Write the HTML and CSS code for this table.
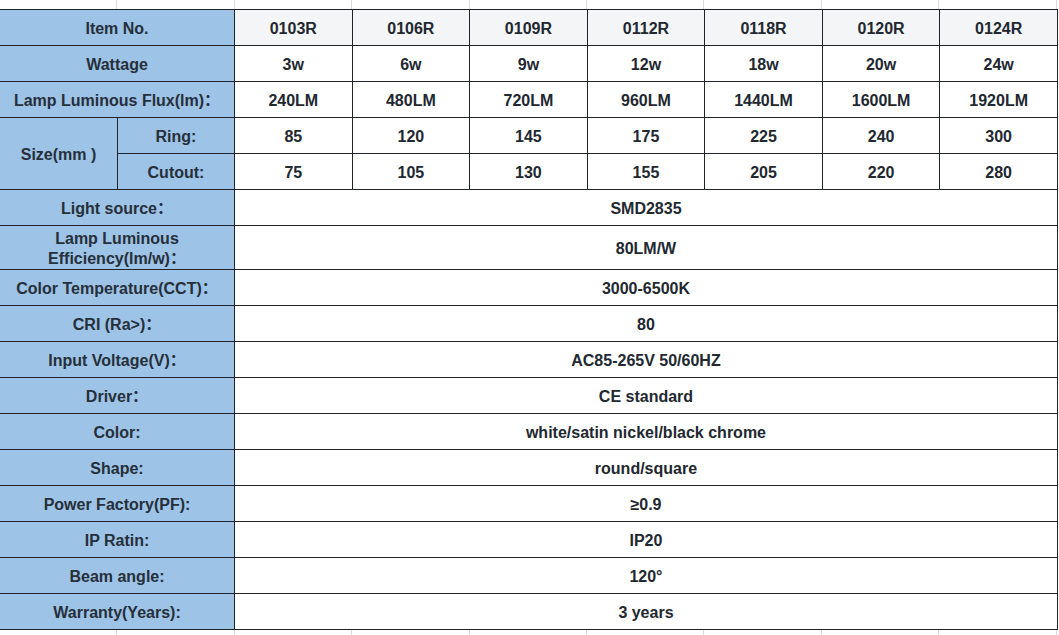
FILE: index.html
```html
<!DOCTYPE html>
<html>
<head>
<meta charset="utf-8">
<link rel="stylesheet" href="styles.css">
</head>
<body>
<div class="sheet">
<table class="spec">
  <colgroup>
    <col class="c-lab1"><col class="c-lab2">
    <col class="c-data"><col class="c-data"><col class="c-data"><col class="c-data"><col class="c-data"><col class="c-data"><col class="c-data">
  </colgroup>
  <tr class="head">
    <th colspan="2">Item No.</th>
    <td>0103R</td><td>0106R</td><td>0109R</td><td>0112R</td><td>0118R</td><td>0120R</td><td>0124R</td>
  </tr>
  <tr>
    <th colspan="2">Wattage</th>
    <td>3w</td><td>6w</td><td>9w</td><td>12w</td><td>18w</td><td>20w</td><td>24w</td>
  </tr>
  <tr>
    <th colspan="2">Lamp Luminous Flux(lm)：</th>
    <td>240LM</td><td>480LM</td><td>720LM</td><td>960LM</td><td>1440LM</td><td>1600LM</td><td>1920LM</td>
  </tr>
  <tr>
    <th rowspan="2">Size(mm )</th>
    <th>Ring:</th>
    <td>85</td><td>120</td><td>145</td><td>175</td><td>225</td><td>240</td><td>300</td>
  </tr>
  <tr>
    <th>Cutout:</th>
    <td>75</td><td>105</td><td>130</td><td>155</td><td>205</td><td>220</td><td>280</td>
  </tr>
  <tr><th colspan="2">Light source：</th><td colspan="7">SMD2835</td></tr>
  <tr class="tall"><th colspan="2">Lamp Luminous<br>Efficiency(lm/w)：</th><td colspan="7">80LM/W</td></tr>
  <tr><th colspan="2">Color Temperature(CCT)：</th><td colspan="7">3000-6500K</td></tr>
  <tr><th colspan="2">CRI (Ra&gt;)：</th><td colspan="7">80</td></tr>
  <tr><th colspan="2">Input Voltage(V)：</th><td colspan="7">AC85-265V 50/60HZ</td></tr>
  <tr><th colspan="2">Driver：</th><td colspan="7">CE standard</td></tr>
  <tr><th colspan="2">Color:</th><td colspan="7">white/satin nickel/black chrome</td></tr>
  <tr><th colspan="2">Shape:</th><td colspan="7">round/square</td></tr>
  <tr><th colspan="2">Power Factory(PF):</th><td colspan="7">≥0.9</td></tr>
  <tr><th colspan="2">IP Ratin:</th><td colspan="7">IP20</td></tr>
  <tr><th colspan="2">Beam angle:</th><td colspan="7">120°</td></tr>
  <tr><th colspan="2">Warranty(Years):</th><td colspan="7">3 years</td></tr>
</table>
</div>
</body>
</html>
```

FILE: styles.css
```css
html, body {
  margin: 0;
  padding: 0;
}
body {
  width: 1059px;
  height: 635px;
  overflow: hidden;
  background-color: #ffffff;
  background-image: repeating-linear-gradient(to right, transparent 0, transparent 116.4px, #d9d9d9 116.4px, #d9d9d9 117.4px);
  font-family: "Liberation Sans", Arial, "Noto Sans CJK SC", sans-serif;
}
.sheet {
  padding-top: 9px;
}
.spec {
  border-collapse: collapse;
  table-layout: fixed;
  width: 1058px;
  margin-left: -1px;
  font-size: 16px;
  font-weight: bold;
  color: #222830;
}
.c-lab1 { width: 118px; }
.c-lab2 { width: 117px; }
.c-data { width: 117.57px; }
.spec th, .spec td {
  border: 1px solid #202428;
  text-align: center;
  vertical-align: middle;
  padding: 2px 0 0 0;
  height: 33px;
  line-height: 20px;
  white-space: nowrap;
}
.spec th {
  background: #9dc3e6;
  font-weight: bold;
  color: #262f3a;
}
.spec td {
  background: #ffffff;
}
.spec .head td {
  background: #f4f5f7;
}
.spec .tall th, .spec .tall td {
  height: 41px;
}
```
